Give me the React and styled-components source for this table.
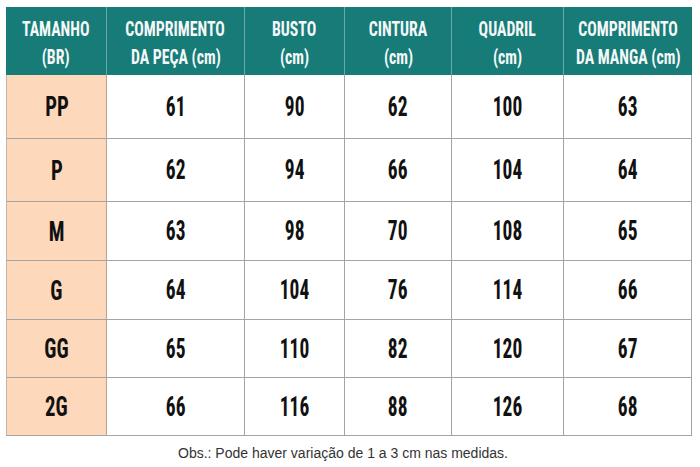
import styled, { createGlobalStyle } from "styled-components";

const GlobalStyle = createGlobalStyle`
  body {
    margin: 0;
    background: #ffffff;
  }
`;

const columns = "101px 138px 100px 107px 112px 128px";

const headers = [
    ["TAMANHO", "(BR)"],
    ["COMPRIMENTO", "DA PEÇA (cm)"],
    ["BUSTO", "(cm)"],
    ["CINTURA", "(cm)"],
    ["QUADRIL", "(cm)"],
    ["COMPRIMENTO", "DA MANGA (cm)"],
];

// size, then measures; height is the row height in the picture
const rows = [
    { size: "PP", values: [61, 90, 62, 100, 63], height: 64 },
    { size: "P", values: [62, 94, 66, 104, 64], height: 63 },
    { size: "M", values: [63, 98, 70, 108, 65], height: 59 },
    { size: "G", values: [64, 104, 76, 114, 66], height: 59 },
    { size: "GG", values: [65, 110, 82, 120, 67], height: 58 },
    { size: "2G", values: [66, 116, 88, 126, 68], height: 58 },
];

export default function App() {
    return (
        <>
            <GlobalStyle />
            <Page>
                <Table>
                    <HeadRow>
                        {headers.map(([top, bottom], i) => (
                            <HeadCell key={i}>
                                <Narrow $sx={0.79}>{top}</Narrow>
                                <Narrow $sx={0.79}>{bottom}</Narrow>
                            </HeadCell>
                        ))}
                    </HeadRow>
                    {rows.map((row) => (
                        <Row key={row.size} $h={row.height}>
                            <SizeCell>
                                <Narrow $sx={0.74}>{row.size}</Narrow>
                            </SizeCell>
                            {row.values.map((value, i) => (
                                <Cell key={i}>
                                    <Narrow $sx={0.72}>{value}</Narrow>
                                </Cell>
                            ))}
                        </Row>
                    ))}
                </Table>
                <Note>Obs.: Pode haver variação de 1 a 3 cm nas medidas.</Note>
            </Page>
        </>
    );
}

const Page = styled.div`
    width: 700px;
    height: 467px;
    padding: 7px 0 0 6px;
    box-sizing: border-box;
`;

const Table = styled.div`
    width: 686px;
    display: flex;
    flex-direction: column;
    font-family: "Roboto", "Liberation Sans", sans-serif;
    font-stretch: condensed;
    font-weight: 700;
`;

// squeezes the glyphs to the narrow display face of the chart
const Narrow = styled.span`
    display: inline-block;
    white-space: nowrap;
    transform: scaleX(${(p) => p.$sx});
`;

const HeadRow = styled.div`
    display: grid;
    grid-template-columns: ${columns};
    height: 68px;
    background-color: #177b77;
`;

const HeadCell = styled.div`
    display: flex;
    flex-direction: column;
    align-items: center;
    justify-content: center;
    color: #f4f8f8;
    font-size: 20px;
    line-height: 28px;
    border-right: 1px solid #6aa9a6;
    padding-top: 4px;

    &:last-child {
        border-right: none;
    }
`;

const Row = styled.div`
    display: grid;
    grid-template-columns: ${columns};
    height: ${(p) => p.$h}px;
`;

const Cell = styled.div`
    display: flex;
    align-items: center;
    justify-content: center;
    font-size: 27px;
    color: #111111;
    background-color: #ffffff;
    border-right: 1px solid #a4a4a4;
    border-bottom: 1px solid #a4a4a4;
`;

const SizeCell = styled(Cell)`
    background-color: #fdd8bb;
    border-left: 1px solid #c8b4a4;
    border-right-color: #b9a392;
    font-size: 28px;
`;

const Note = styled.p`
    margin: 9px 0 0;
    width: 674px;
    text-align: center;
    font-family: "Liberation Sans", Arial, sans-serif;
    font-size: 14px;
    color: #333333;
`;
